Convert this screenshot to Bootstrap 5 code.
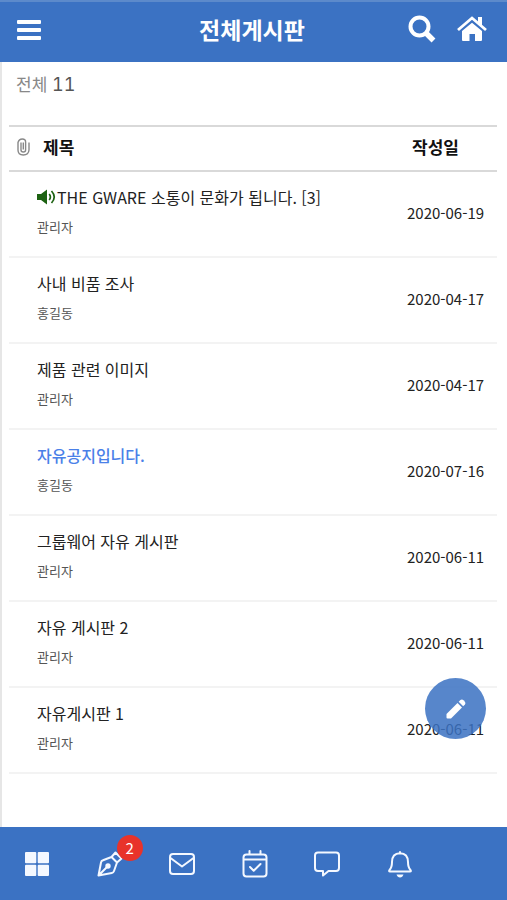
<!DOCTYPE html>
<html lang="ko">
<head>
<meta charset="utf-8">
<meta name="viewport" content="width=device-width, initial-scale=1">
<title>전체게시판</title>
<link href="https://cdn.jsdelivr.net/npm/bootstrap@5.3.0/dist/css/bootstrap.min.css" rel="stylesheet">
<style>
:root { --brand: #3b72c3; }
body { font-family: "Noto Sans CJK KR", sans-serif; color: #222; background: #fff; }
a { text-decoration: none; }
svg { display: block; }
.topbar { background: var(--brand); border-top: 2px solid #5c8acb; height: 62px; padding: 0 19px 6px 16px; }
.topbar h1 { font-size: 23px; line-height: 32px; }
.bar-side { width: 80px; }
.page-body { border-left: 2px solid #e6e6e6; }
.total { font-size: 17px; line-height: 24px; color: #888; padding: 10px 14px 28px; }
.total span { font-family: Inter, sans-serif; font-size: 18px; font-feature-settings: "tnum"; color: #555; }
.board-wrap { padding: 0 10px 0 7px; }
.board { table-layout: fixed; }
.board th { height: 45px; font-size: 17px; line-height: 24px; color: #111; padding-bottom: 4px; border-top: 2px solid #d9d9d9; border-bottom: 2px solid #d9d9d9; }
.board td { height: 86px; padding: 0 0 8px; border-bottom: 2px solid #f3f3f3; }
.col-clip { width: 28px; }
.col-date { width: 100px; }
.board .subject-head { padding-left: 6px; }
.board .date-head { padding-left: 15px; }
.subject { font-size: 16px; line-height: 26px; color: #222; }
.subject.notice { color: #4a80e8; font-weight: 500; }
.writer { font-size: 13px; line-height: 20px; color: #555; margin-top: 7px; }
.board .date { font-size: 15px; padding: 0 0 2px 10px; }
.write-btn { width: 61px; height: 61px; right: 21px; bottom: 161px; background: rgba(59,114,195,.86); z-index: 20; }
.tabs { background: var(--brand); height: 73px; padding: 0 71px 0 1px; z-index: 10; }
.tabs a { color: #f4f8ff; }
.count { left: 20px; top: -16px; width: 26px; height: 26px; background: #e8332a; font-size: 15px; line-height: 26px; }
</style>
<script src="https://cdn.jsdelivr.net/npm/bootstrap@5.3.0/dist/js/bootstrap.bundle.min.js"></script>
</head>
<body class="d-flex flex-column min-vh-100">
<header class="topbar d-flex align-items-center justify-content-between text-white">
  <div class="bar-side">
    <button type="button" class="btn p-0 border-0 text-white" aria-label="메뉴">
      <svg width="26" height="24" viewBox="0 0 26 24" fill="currentColor"><rect x="1" y="2" width="24" height="4" rx="1"/><rect x="1" y="10" width="24" height="4" rx="1"/><rect x="1" y="18" width="24" height="4" rx="1"/></svg>
    </button>
  </div>
  <h1 class="m-0 fw-bold">전체게시판</h1>
  <div class="bar-side d-flex justify-content-between align-items-center">
    <button type="button" class="btn p-0 border-0 text-white" aria-label="검색">
      <svg width="28" height="28" viewBox="0 0 28 28" fill="none" stroke="currentColor"><circle cx="11.5" cy="11.5" r="9" stroke-width="4"/><path d="M18.5 18.5L25.5 25.5" stroke-width="5.4"/></svg>
    </button>
    <a href="#" class="text-white" aria-label="홈">
      <svg width="32" height="26" viewBox="0 0 32 26" fill="currentColor"><path d="M16 6.8L26 15V24Q26 25 25 25H19V18H13.5V25H7Q6 25 6 24V15Z"/><path d="M2 14L16 2L30 14" fill="none" stroke="currentColor" stroke-width="2.8"/><path d="M22 1H26V10L22 6.5Z"/></svg>
    </a>
  </div>
</header>

<main class="page-body flex-grow-1">
  <div class="total">전체 <span>11</span></div>
  <div class="board-wrap">
    <table class="board w-100 mb-0">
      <colgroup><col class="col-clip"><col><col class="col-date"></colgroup>
      <thead>
        <tr>
          <th scope="col" class="ps-2" aria-label="첨부파일"><svg width="13" height="18" viewBox="0 0 13 18" fill="none" stroke="#888" stroke-width="1.4"><path d="M4 4.5V12Q4 14 6.3 14T8.6 12V4Q8.6 1 5.3 1T1 4.5V12Q1 17 6.3 17T12 12V4.5M6.3 4.5V11.5"/></svg></th>
          <th scope="col" class="subject-head">제목</th>
          <th scope="col" class="date-head">작성일</th>
        </tr>
      </thead>
      <tbody>
        <tr><td></td><td><a href="#" class="subject d-flex align-items-center"><svg width="20" height="16" viewBox="0 0 20 16"><path d="M0 5H4L10 0.5V15.5L4 11H0Z" fill="#1d6212"/><path d="M12.2 5Q14.6 8 12.2 11M14.5 2Q20 8 14.5 14" fill="none" stroke="#1d6212" stroke-width="1.7"/></svg><span>THE GWARE 소통이 문화가 됩니다. [3]</span></a><div class="writer">관리자</div></td><td class="date">2020-06-19</td></tr>
        <tr><td></td><td><a href="#" class="subject d-block">사내 비품 조사</a><div class="writer">홍길동</div></td><td class="date">2020-04-17</td></tr>
        <tr><td></td><td><a href="#" class="subject d-block">제품 관련 이미지</a><div class="writer">관리자</div></td><td class="date">2020-04-17</td></tr>
        <tr><td></td><td><a href="#" class="subject notice d-block">자유공지입니다.</a><div class="writer">홍길동</div></td><td class="date">2020-07-16</td></tr>
        <tr><td></td><td><a href="#" class="subject d-block">그룹웨어 자유 게시판</a><div class="writer">관리자</div></td><td class="date">2020-06-11</td></tr>
        <tr><td></td><td><a href="#" class="subject d-block">자유 게시판 2</a><div class="writer">관리자</div></td><td class="date">2020-06-11</td></tr>
        <tr><td></td><td><a href="#" class="subject d-block">자유게시판 1</a><div class="writer">관리자</div></td><td class="date">2020-06-11</td></tr>
      </tbody>
    </table>
  </div>
</main>

<button type="button" class="write-btn btn border-0 p-0 rounded-circle position-fixed d-flex align-items-center justify-content-center text-white" aria-label="글쓰기">
  <svg width="20" height="20" viewBox="0 0 20 20" fill="currentColor"><path d="M0.5 15L11.5 4L16 8.5L5 19.5H1.5Q.5 19.5.5 18.5Z"/><path d="M12.7 2.8L14.4 1.1Q16 0 17.5 1.3L18.9 2.7Q20 4.2 18.9 5.6L17.2 7.3Z"/></svg>
</button>

<nav class="tabs sticky-bottom d-flex align-items-center" aria-label="하단 메뉴">
  <a href="#" class="flex-fill d-flex justify-content-center" aria-label="대시보드"><svg width="26" height="26" viewBox="0 0 26 26" fill="currentColor"><rect x="1" y="1" width="11.3" height="11.3" rx="1"/><rect x="13.7" y="1" width="11.3" height="11.3" rx="1"/><rect x="1" y="13.7" width="11.3" height="11.3" rx="1"/><rect x="13.7" y="13.7" width="11.3" height="11.3" rx="1"/></svg></a>
  <a href="#" class="flex-fill d-flex justify-content-center" aria-label="결재 2건"><span class="position-relative"><svg width="26" height="26" viewBox="0 0 26 26" fill="none" stroke="currentColor" stroke-width="2" stroke-linejoin="round"><path d="M1.5 24.5L4 11.5Q4.3 9.8 6 9.3L14.5 6L20 11.5L17 20Q16.5 21.7 14.8 22ZM1.5 24.5L10 16M14.5 6L18.5 1.5L24.5 7.5L20 11.5"/><circle cx="11" cy="15" r="1.7" fill="currentColor"/></svg><span class="count position-absolute rounded-circle text-white text-center">2</span></span></a>
  <a href="#" class="flex-fill d-flex justify-content-center" aria-label="메일"><svg width="26" height="26" viewBox="0 0 26 26" fill="none" stroke="currentColor" stroke-width="2" stroke-linejoin="round"><rect x="1" y="3" width="24" height="20" rx="3"/><path d="M1.5 7L13 15.5L24.5 7"/></svg></a>
  <a href="#" class="flex-fill d-flex justify-content-center" aria-label="일정"><svg width="26" height="28" viewBox="0 0 26 28" fill="none" stroke="currentColor" stroke-width="2" stroke-linecap="round" stroke-linejoin="round"><rect x="1.5" y="4.5" width="23" height="22" rx="3"/><path d="M7.5 1V4M18.5 1V4M2 9.5H24M8 17L11.7 20.7L18.5 14"/></svg></a>
  <a href="#" class="flex-fill d-flex justify-content-center" aria-label="메시지"><svg width="26" height="26" viewBox="0 0 26 26" fill="none" stroke="currentColor" stroke-width="2" stroke-linejoin="round"><path d="M4 1.5H22Q25 1.5 25 4.5V17Q25 20 22 20H14.5L9 24.5V20H4Q1 20 1 17V4.5Q1 1.5 4 1.5Z"/></svg></a>
  <a href="#" class="flex-fill d-flex justify-content-center" aria-label="알림"><svg width="26" height="28" viewBox="0 0 26 28" fill="none" stroke="currentColor" stroke-width="2" stroke-linejoin="round"><path d="M13 3.2Q5 3.5 5 12Q5 17.5 2.5 20Q1.5 21.5 3 21.5H23Q24.5 21.5 23.5 20Q21 17.5 21 12Q21 3.5 13 3.2ZM13 1.2V3"/><path d="M9.5 24.5H16.5Q15.5 27.5 13 27.5T9.5 24.5Z" fill="currentColor" stroke="none"/></svg></a>
</nav>
</body>
</html>
